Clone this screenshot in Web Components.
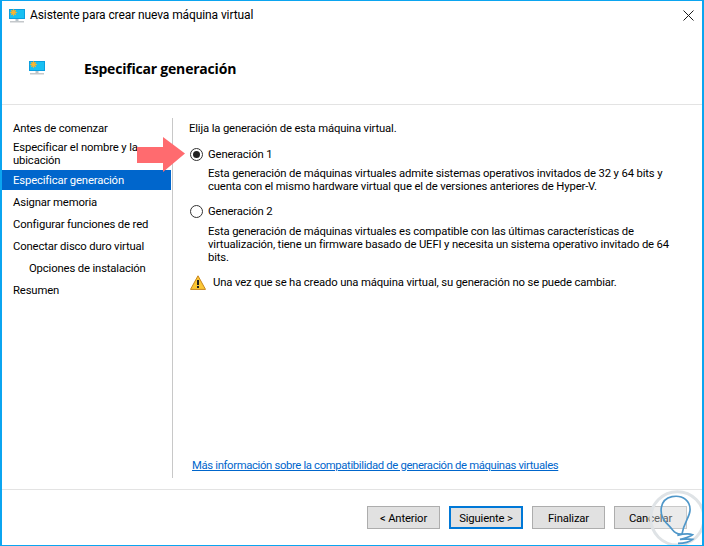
<!DOCTYPE html>
<html>
<head>
<meta charset="utf-8">
<title>Asistente</title>
<style>
  html, body { margin: 0; height: 100%; background: #fff; }
  body { font: 12px/13px Roboto, "Liberation Sans", sans-serif; color: #000; overflow: hidden; }
</style>
</head>
<body>
<template id="vm-icon-tpl">
  <style>
    :host { display: inline-block; line-height: 0; }
  </style>
  <svg width="16" height="16" viewBox="0 0 16 16">
    <rect x="0" y="1" width="16" height="10" fill="#0a9fe0"/>
    <rect x="1" y="2" width="14" height="8" fill="#19c0f2"/>
    <circle cx="4.5" cy="4.5" r="2.4" fill="#f7a823"/>
    <path d="M4.5 .9v7.2M.9 4.5h7.2M2 2l5 5M7 2l-5 5" stroke="#f7b733" stroke-width=".8"/>
    <rect class="stand" x="6.5" y="11" width="3" height="2" fill="#b9c4ca"/>
    <rect x="1" y="13" width="14" height="1.5" fill="#c4c8cb"/>
  </svg>
</template>

<script>
  const titleFont = 'letter-spacing: -.1px;';
  const contentFont = 'font-size: 11.3px; letter-spacing: -.15px;';

  class VmIcon extends HTMLElement {
    constructor() {
      super();
      this.attachShadow({ mode: 'open' });
      this.shadowRoot.appendChild(document.getElementById('vm-icon-tpl').content.cloneNode(true));
    }
  }

  class WizardWindow extends HTMLElement {
    constructor() {
      super();
      this.attachShadow({ mode: 'open' });
      this.shadowRoot.innerHTML = `
        <style>
          :host {
            display: flex; flex-direction: column; position: relative;
            box-sizing: border-box; width: 704px; height: 546px;
            border: solid #0ba5f0; border-width: 1px 2px 1px 2px; background: #fff; overflow: hidden;
          }
          .main { display: flex; height: 384px; }
        </style>
        <slot name="title"></slot>
        <slot name="header"></slot>
        <div class="main"><slot name="nav"></slot><slot name="body"></slot></div>
        <slot name="footer"></slot>
        <slot name="over"></slot>
      `;
    }
  }

  class TitleBar extends HTMLElement {
    constructor() {
      super();
      this.attachShadow({ mode: 'open' });
      this.shadowRoot.innerHTML = `
        <style>
          :host { display: flex; align-items: center; height: 29px; padding: 0 6px 0 7px; gap: 5px; ${titleFont} }
          .text { flex: 1; }
          svg { display: block; margin-right: 2px; }
        </style>
        <vm-icon></vm-icon>
        <span class="text"><slot></slot></span>
        <svg width="11" height="11" viewBox="0 0 11 11"><path d="M.5 .5l10 10M10.5 .5l-10 10" stroke="#1a1a1a" fill="none"/></svg>
      `;
    }
  }

  class WizardHeader extends HTMLElement {
    constructor() {
      super();
      this.attachShadow({ mode: 'open' });
      this.shadowRoot.innerHTML = `
        <style>
          :host { display: flex; align-items: center; height: 75px; padding-left: 27px; border-bottom: 1px solid #e3e3e3; box-sizing: border-box; }
          vm-icon { margin-top: 2px; }
          h1 { margin: 4px 0 0 39px; font: 700 14px/18px "Open Sans", sans-serif; letter-spacing: -.2px; }
        </style>
        <vm-icon></vm-icon>
        <h1><slot></slot></h1>
      `;
    }
  }

  class StepNav extends HTMLElement {
    constructor() {
      super();
      this.attachShadow({ mode: 'open' });
      this.shadowRoot.innerHTML = `
        <style>
          :host { display: flex; flex-direction: column; gap: 2px; box-sizing: border-box; width: 169px; padding-top: 13px; margin-right: 1px; ${contentFont} }
        </style>
        <slot></slot>
      `;
    }
  }

  class StepItem extends HTMLElement {
    constructor() {
      super();
      this.attachShadow({ mode: 'open' });
      this.shadowRoot.innerHTML = `
        <style>
          :host { display: block; padding: 4px 8px 3px 11px; }
          :host([active]) { background: #0066cc; color: #fff; }
          :host([sub]) { padding-left: 27px; }
          :host([wrap]) { margin: -3px 0 -2px; }
        </style>
        <slot></slot>
      `;
    }
  }

  class WizardBody extends HTMLElement {
    constructor() {
      super();
      this.attachShadow({ mode: 'open' });
      this.shadowRoot.innerHTML = `
        <style>
          :host {
            display: flex; flex-direction: column; flex: 1; box-sizing: border-box;
            margin: 13px 0 11px; padding: 4px 30px 6px 16px; border-left: 1px solid #c8c8c8; ${contentFont}
          }
          .push { margin: auto 0 0 3px; letter-spacing: -.35px; }
          ::slotted(a) { color: #0066cc; text-decoration: underline; }
        </style>
        <slot></slot>
        <div class="push"><slot name="link"></slot></div>
      `;
    }
  }

  class GenOption extends HTMLElement {
    constructor() {
      super();
      this.attachShadow({ mode: 'open' });
      this.shadowRoot.innerHTML = `
        <style>
          :host { display: block; margin-top: 11px; }
          .head { display: flex; align-items: center; gap: 5px; height: 14px; padding-left: 1px; }
          .radio { box-sizing: border-box; width: 13px; height: 13px; border: 1px solid #333; border-radius: 50%; background: #fff; display: flex; align-items: center; justify-content: center; }
          :host([checked]) .radio::after { content: ""; width: 7px; height: 7px; border-radius: 50%; background: #222; }
          .desc { margin: var(--desc-gap, 6px) 0 0 19px; }
        </style>
        <div class="head"><span class="radio"></span><span class="label"></span></div>
        <div class="desc"><slot></slot></div>
      `;
    }
    connectedCallback() {
      this.shadowRoot.querySelector('.label').textContent = this.getAttribute('label');
    }
  }

  class WarnNote extends HTMLElement {
    constructor() {
      super();
      this.attachShadow({ mode: 'open' });
      this.shadowRoot.innerHTML = `
        <style>
          :host { display: flex; align-items: center; gap: 7px; margin-top: 10px; height: 16px; padding-left: 1px; }
          svg { display: block; }
        </style>
        <svg width="16" height="15" viewBox="0 0 16 15">
          <path d="M8 .8L15.5 14.4H.5z" fill="#fbc735" stroke="#c8851d" stroke-linejoin="round"/>
          <rect x="7" y="5" width="2" height="5" fill="#222"/>
          <rect x="7" y="11" width="2" height="2" fill="#222"/>
        </svg>
        <span><slot></slot></span>
      `;
    }
  }

  class WizardFooter extends HTMLElement {
    constructor() {
      super();
      this.attachShadow({ mode: 'open' });
      this.shadowRoot.innerHTML = `
        <style>
          :host { display: flex; justify-content: flex-end; align-items: flex-start; gap: 9px; box-sizing: border-box; flex: 1; padding: 16px 15px 0 0; border-top: 1px solid #e3e3e3; }
        </style>
        <slot></slot>
      `;
    }
  }

  class WizardButton extends HTMLElement {
    constructor() {
      super();
      this.attachShadow({ mode: 'open' });
      this.shadowRoot.innerHTML = `
        <style>
          :host {
            display: flex; align-items: center; justify-content: center; box-sizing: border-box; padding-top: 1px;
            width: 73px; height: 23px; background: #e1e1e1; border: 1px solid #adadad; ${contentFont}
          }
          :host([focused]) { border: 2px solid #0078d7; width: 74px; }
        </style>
        <slot></slot>
      `;
    }
  }

  class CalloutArrow extends HTMLElement {
    constructor() {
      super();
      this.attachShadow({ mode: 'open' });
      this.shadowRoot.innerHTML = `
        <style>:host { position: absolute; left: 135px; top: 136px; line-height: 0; }</style>
        <svg width="48" height="35" viewBox="0 0 48 35"><path d="M0 10H26V0L48 16.5 26 35V26H0z" fill="#ff6b6f"/></svg>
      `;
    }
  }

  class SiteMark extends HTMLElement {
    constructor() {
      super();
      this.attachShadow({ mode: 'open' });
      this.shadowRoot.innerHTML = `
        <style>:host { position: absolute; left: 638px; top: 489px; line-height: 0; }</style>
        <svg width="64" height="56" viewBox="0 0 192 168">
          <circle cx="112" cy="85" r="80" fill="#fff" fill-opacity=".35" stroke="#dfe3e6" stroke-width="9"/>
          <path d="M78 98C55 72 58 28 96 20c34-6 56 14 54 42-2 22-18 34-24 70-12 2-20-2-28-12-6-8-12-14-20-22" fill="none" stroke="#4f97c9" stroke-width="5"/>
          <path d="M112 136c16-4 34-6 46-2-8 8-24 10-38 14 12 0 26-2 38 0-10 8-28 12-44 12" fill="none" stroke="#4f97c9" stroke-width="5"/>
        </svg>
      `;
    }
  }

  customElements.define('vm-icon', VmIcon);
  customElements.define('wizard-window', WizardWindow);
  customElements.define('title-bar', TitleBar);
  customElements.define('wizard-header', WizardHeader);
  customElements.define('step-nav', StepNav);
  customElements.define('step-item', StepItem);
  customElements.define('wizard-body', WizardBody);
  customElements.define('gen-option', GenOption);
  customElements.define('warn-note', WarnNote);
  customElements.define('wizard-footer', WizardFooter);
  customElements.define('wizard-button', WizardButton);
  customElements.define('callout-arrow', CalloutArrow);
  customElements.define('site-mark', SiteMark);
</script>

<wizard-window>
  <title-bar slot="title">Asistente para crear nueva máquina virtual</title-bar>
  <wizard-header slot="header">Especificar generación</wizard-header>
  <step-nav slot="nav">
    <step-item>Antes de comenzar</step-item>
    <step-item wrap>Especificar el nombre y la ubicación</step-item>
    <step-item active>Especificar generación</step-item>
    <step-item>Asignar memoria</step-item>
    <step-item>Configurar funciones de red</step-item>
    <step-item>Conectar disco duro virtual</step-item>
    <step-item sub>Opciones de instalación</step-item>
    <step-item>Resumen</step-item>
  </step-nav>
  <wizard-body slot="body">
    <div style="margin-bottom:1px">Elija la generación de esta máquina virtual.</div>
    <gen-option label="Generación 1" checked>Esta generación de máquinas virtuales admite sistemas operativos invitados de 32 y 64 bits y cuenta con el mismo hardware virtual que el de versiones anteriores de Hyper-V.</gen-option>
    <gen-option label="Generación 2" style="--desc-gap: 7px">Esta generación de máquinas virtuales es compatible con las últimas características de virtualización, tiene un firmware basado de UEFI y necesita un sistema operativo invitado de 64 bits.</gen-option>
    <warn-note>Una vez que se ha creado una máquina virtual, su generación no se puede cambiar.</warn-note>
    <a slot="link" href="#">Más información sobre la compatibilidad de generación de máquinas virtuales</a>
  </wizard-body>
  <wizard-footer slot="footer">
    <wizard-button>&lt; Anterior</wizard-button>
    <wizard-button focused>Siguiente &gt;</wizard-button>
    <wizard-button>Finalizar</wizard-button>
    <wizard-button>Cancelar</wizard-button>
  </wizard-footer>
  <callout-arrow slot="over"></callout-arrow>
  <site-mark slot="over"></site-mark>
</wizard-window>
</body>
</html>
